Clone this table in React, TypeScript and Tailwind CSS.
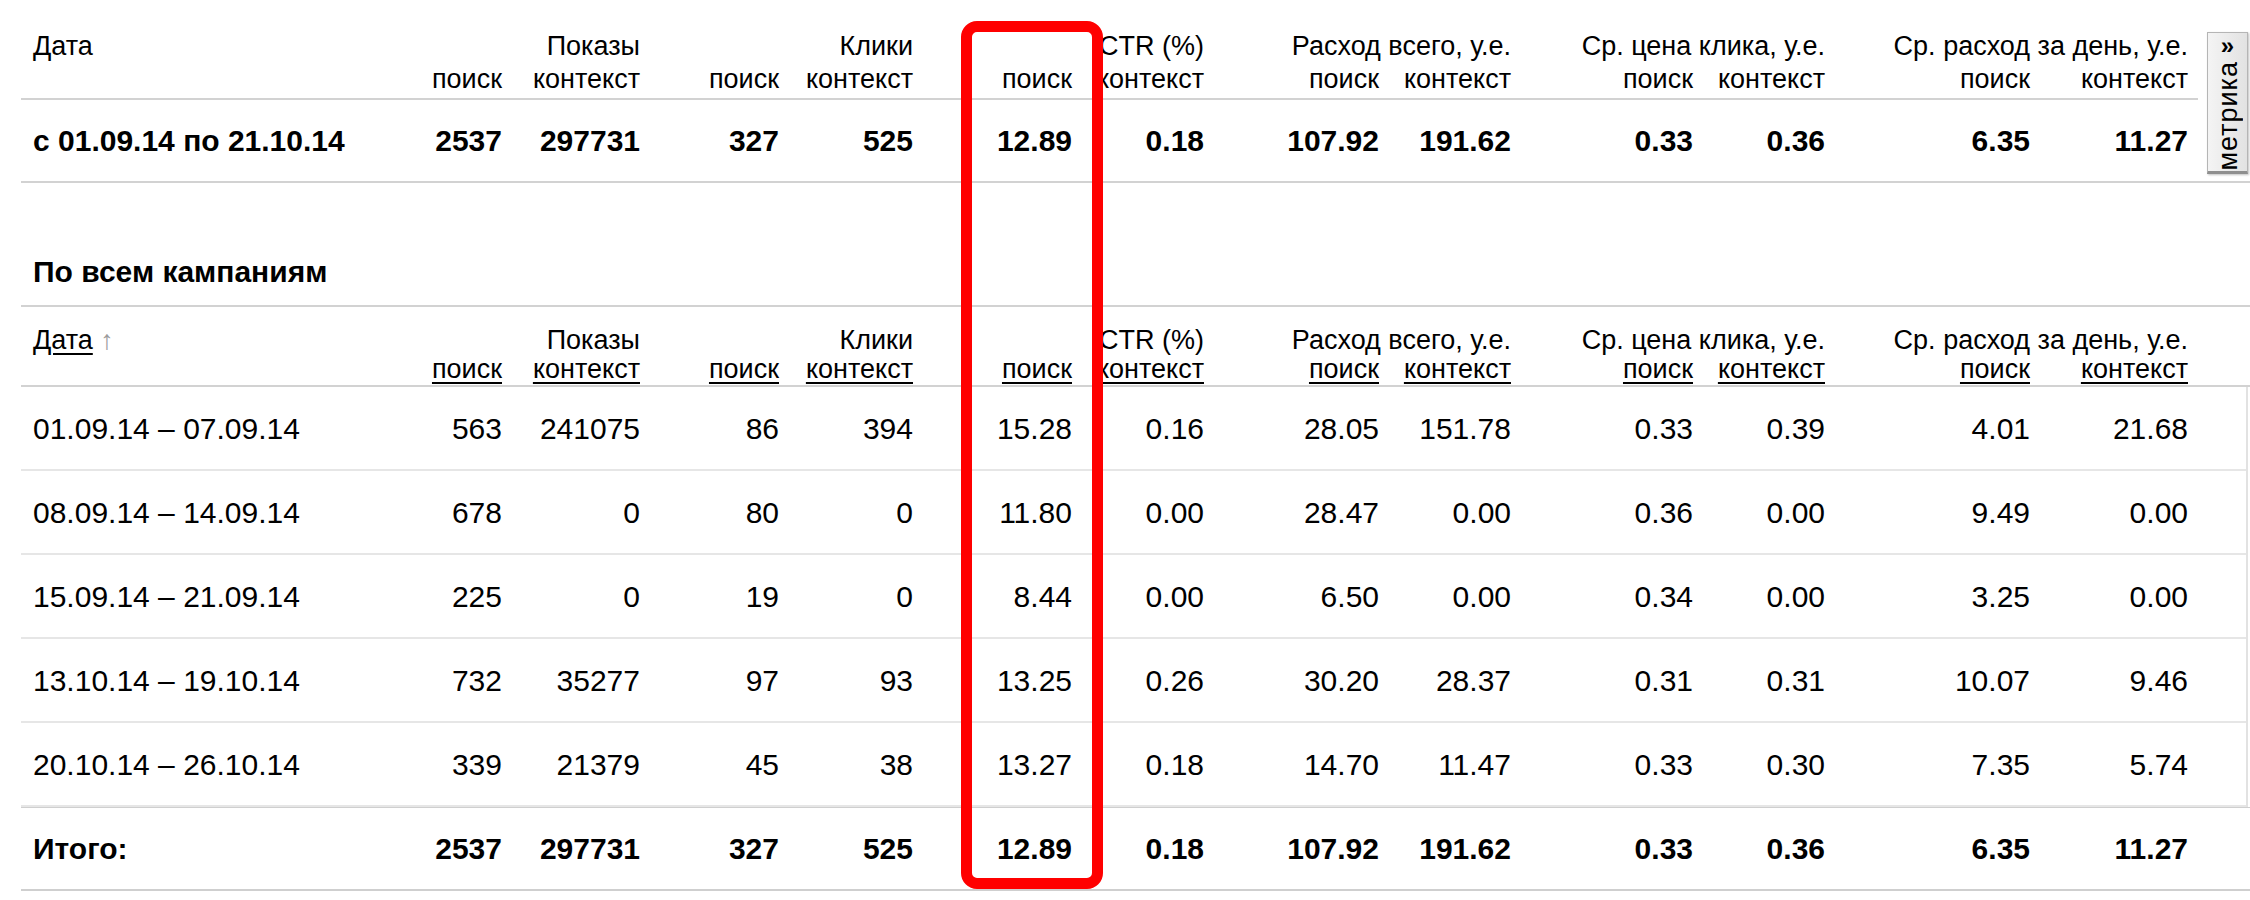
import React from "react";

type Row = { date: string; values: string[] };

const rows: Row[] = [
  { date: "01.09.14 – 07.09.14", values: ["563", "241075", "86", "394", "15.28", "0.16", "28.05", "151.78", "0.33", "0.39", "4.01", "21.68"] },
  { date: "08.09.14 – 14.09.14", values: ["678", "0", "80", "0", "11.80", "0.00", "28.47", "0.00", "0.36", "0.00", "9.49", "0.00"] },
  { date: "15.09.14 – 21.09.14", values: ["225", "0", "19", "0", "8.44", "0.00", "6.50", "0.00", "0.34", "0.00", "3.25", "0.00"] },
  { date: "13.10.14 – 19.10.14", values: ["732", "35277", "97", "93", "13.25", "0.26", "30.20", "28.37", "0.31", "0.31", "10.07", "9.46"] },
  { date: "20.10.14 – 26.10.14", values: ["339", "21379", "45", "38", "13.27", "0.18", "14.70", "11.47", "0.33", "0.30", "7.35", "5.74"] },
];

const totals = ["2537", "297731", "327", "525", "12.89", "0.18", "107.92", "191.62", "0.33", "0.36", "6.35", "11.27"];

const groups = [
  "Показы",
  "Клики",
  "CTR (%)",
  "Расход всего, у.е.",
  "Ср. цена клика, у.е.",
  "Ср. расход за день, у.е.",
];

// колонки: дата + 12 числовых, правые края совпадают со скриншотом
const GRID =
  "grid grid-cols-[359px_122px_138px_139px_134px_159px_132px_175px_132px_182px_132px_205px_158px]";

function HeaderCells({ linked }: { linked: boolean }) {
  const sub = linked ? "underline decoration-2 underline-offset-[4px]" : "";
  return (
    <>
      <div className="row-span-2 pl-3">
        {linked ? (
          <>
            <span className="underline decoration-2 underline-offset-[4px]">Дата</span>{" "}
            <span className="text-[#9b9b9b]">↑</span>
          </>
        ) : (
          "Дата"
        )}
      </div>
      {groups.map((g) => (
        <div key={g} className="col-span-2 text-right whitespace-nowrap">
          {g}
        </div>
      ))}
      {groups.map((g) => (
        <React.Fragment key={g}>
          <div className="text-right">
            <span className={sub}>поиск</span>
          </div>
          <div className="text-right">
            <span className={sub}>контекст</span>
          </div>
        </React.Fragment>
      ))}
    </>
  );
}

function DataRow({
  label,
  values,
  bold,
  className,
}: {
  label: string;
  values: string[];
  bold?: boolean;
  className: string;
}) {
  return (
    <div className={`${GRID} items-center text-[30px] ${bold ? "font-bold" : ""} ${className}`}>
      <div className="pl-3 whitespace-nowrap">{label}</div>
      {values.map((v, i) => (
        <div key={i} className="text-right">
          {v}
        </div>
      ))}
    </div>
  );
}

export default function App() {
  return (
    <div className="relative w-[2250px] h-[900px] overflow-hidden bg-white text-black font-['Liberation_Sans',Arial,sans-serif]">
      {/* Сводка за период */}
      <div className={`${GRID} ml-[21px] mr-[52px] h-[100px] pt-[33px] border-b-2 border-[#d2d2d2] text-[27px] leading-[26px]`}>
        <HeaderCells linked={false} />
      </div>
      <DataRow
        label="с 01.09.14 по 21.10.14"
        values={totals}
        bold
        className="ml-[21px] h-[83px] border-b-2 border-[#d2d2d2]"
      />

      {/* По всем кампаниям */}
      <div className="ml-[21px] h-[124px] flex items-end pb-[16px] pl-3 border-b-2 border-[#d2d2d2] text-[30px] leading-[34px] font-bold">
        По всем кампаниям
      </div>
      <div className={`${GRID} ml-[21px] h-[80px] pt-[20px] border-b-2 border-[#d2d2d2] text-[27px] leading-[26px]`}>
        <HeaderCells linked />
      </div>

      <div className="ml-[21px] mr-[2px] border-r-2 border-[#e2e2e2]">
        {rows.map((r) => (
          <DataRow
            key={r.date}
            label={r.date}
            values={r.values}
            className="h-[84px] border-b-2 border-[#e6e6e6]"
          />
        ))}
      </div>
      <DataRow
        label="Итого:"
        values={totals}
        bold
        className="ml-[21px] h-[84px] border-t border-b-2 border-[#cfcfcf]"
      />

      {/* выделение колонки CTR поиск */}
      <div className="absolute left-[961px] top-[21px] w-[142px] h-[868px] border-[11px] border-[#ff0000] rounded-[16px]" />

      {/* боковая вкладка метрики */}
      <div className="absolute left-[2207px] top-[32px] w-[41px] h-[142px] flex flex-col items-center bg-gradient-to-r from-[#f4f4f4] to-[#e2e2e2] border border-[#b5b5b5] border-b-[3px] border-b-[#8f8f8f] shadow-[1px_1px_2px_rgba(0,0,0,0.25)]">
        <span className="text-[24px] font-bold leading-[22px] mt-[2px]">»</span>
        <span className="[writing-mode:vertical-rl] rotate-180 text-[27px] leading-[36px] tracking-[1px] mt-[4px]">
          метрика
        </span>
      </div>
    </div>
  );
}
